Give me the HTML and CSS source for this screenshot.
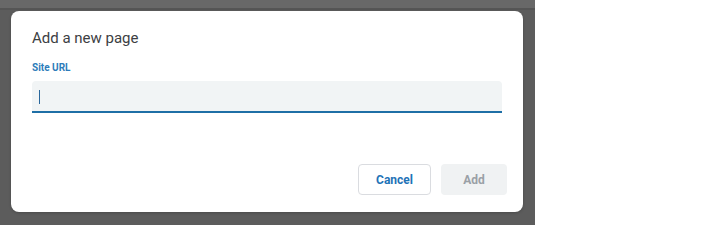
FILE: index.html
```html
<!DOCTYPE html>
<html>
<head>
<meta charset="utf-8">
<link rel="stylesheet" href="styles.css">
</head>
<body>
<div class="overlay">
  <div class="dialog">
    <div class="title">Add a new page</div>
    <label class="label">Site URL</label>
    <div class="input"><span class="caret"></span></div>
    <div class="footer">
      <button class="btn cancel">Cancel</button>
      <button class="btn add">Add</button>
    </div>
  </div>
</div>
</body>
</html>
```
FILE: styles.css
```css
html, body {
  margin: 0;
  padding: 0;
  background: #ffffff;
  font-family: Roboto, "Liberation Sans", Arial, sans-serif;
}
.overlay {
  width: 535px;
  height: 225px;
  box-sizing: border-box;
  padding: 11px 0 0 11px;
  background: linear-gradient(#686868 0, #686868 8px, #555555 8px, #555555 10px, #5c5c5c 10px);
}
.dialog {
  width: 512px;
  height: 201px;
  box-sizing: border-box;
  background: #ffffff;
  border-radius: 8px;
  padding: 17px 16px 17px 21px;
  display: flex;
  flex-direction: column;
  box-shadow: 0 1px 3px rgba(0,0,0,0.2);
}
.title {
  font-size: 15px;
  line-height: 20px;
  color: #3c4043;
}
.label {
  margin-top: 14px;
  font-size: 10px;
  line-height: 12px;
  font-weight: 700;
  color: #2d7cba;
}
.input {
  margin-top: 7px;
  margin-right: 5px;
  height: 32px;
  box-sizing: border-box;
  background: #f1f4f5;
  border-bottom: 2px solid #1e6fa6;
  border-radius: 4px 4px 0 0;
  display: flex;
  align-items: center;
  padding-left: 7px;
}
.caret {
  width: 1px;
  height: 14px;
  background: #2a679c;
  margin-top: 2px;
}
.footer {
  margin-top: auto;
  display: flex;
  justify-content: flex-end;
  gap: 10px;
}
.btn {
  height: 31px;
  box-sizing: border-box;
  border-radius: 4px;
  font-family: Roboto, "Liberation Sans", Arial, sans-serif;
  font-size: 12px;
  font-weight: 700;
  padding: 0;
}
.cancel {
  width: 73px;
  background: #ffffff;
  border: 1px solid #dadce0;
  color: #1f73b7;
}
.add {
  width: 66px;
  background: #f0f2f3;
  border: none;
  color: #9aa0a6;
}
```
